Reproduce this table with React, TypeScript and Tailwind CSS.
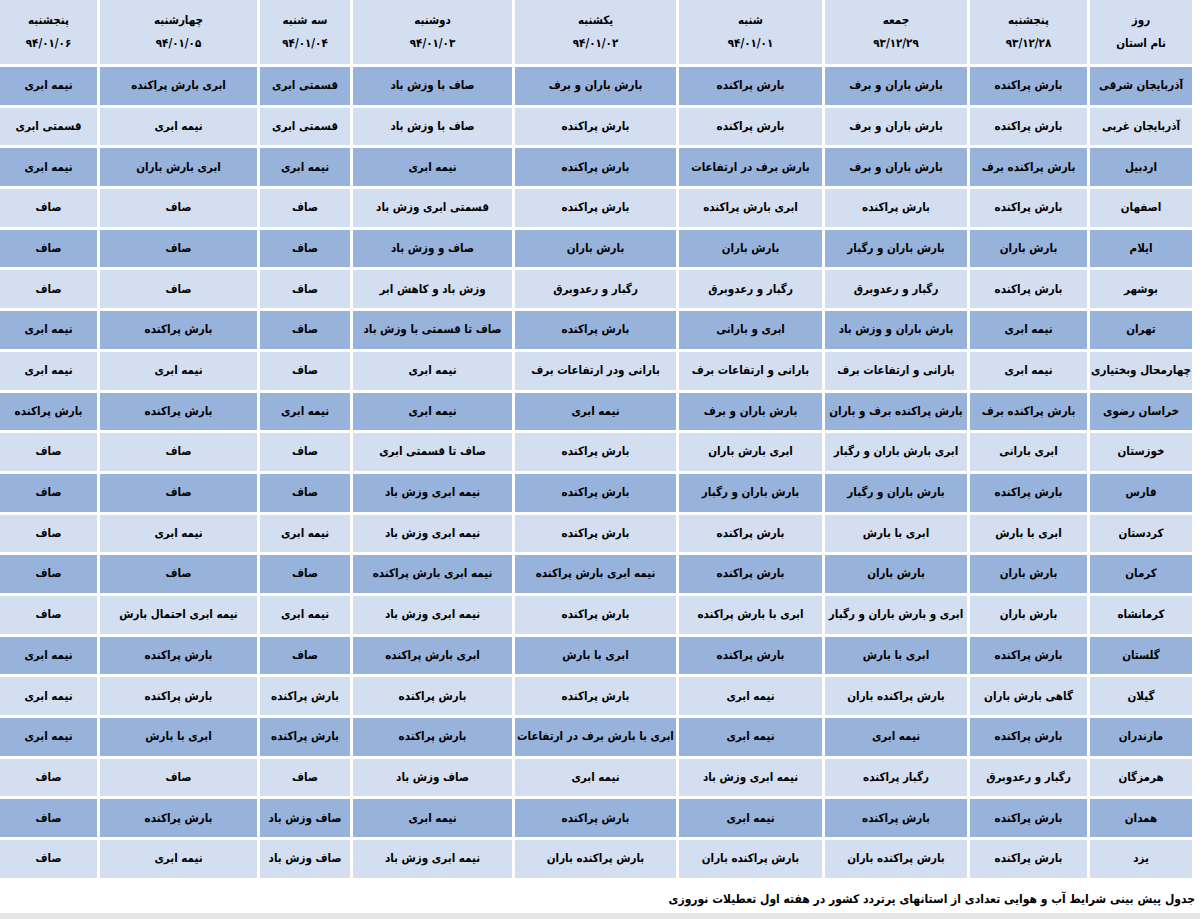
import React from "react";

const days = [
  { name: "پنجشنبه", date: "۹۳/۱۲/۲۸" },
  { name: "جمعه", date: "۹۳/۱۲/۲۹" },
  { name: "شنبه", date: "۹۴/۰۱/۰۱" },
  { name: "یکشنبه", date: "۹۴/۰۱/۰۲" },
  { name: "دوشنبه", date: "۹۴/۰۱/۰۳" },
  { name: "سه شنبه", date: "۹۴/۰۱/۰۴" },
  { name: "چهارشنبه", date: "۹۴/۰۱/۰۵" },
  { name: "پنجشنبه", date: "۹۴/۰۱/۰۶" },
];

const rows: string[][] = [
  ["آذربایجان شرقی", "بارش پراکنده", "بارش باران و برف", "بارش پراکنده", "بارش باران و برف", "صاف با وزش باد", "قسمتی ابری", "ابری بارش پراکنده", "نیمه ابری"],
  ["آذربایجان غربی", "بارش پراکنده", "بارش باران و برف", "بارش پراکنده", "بارش پراکنده", "صاف با وزش باد", "قسمتی ابری", "نیمه ابری", "قسمتی ابری"],
  ["اردبیل", "بارش پراکنده برف", "بارش باران و برف", "بارش برف در ارتفاعات", "بارش پراکنده", "نیمه ابری", "نیمه ابری", "ابری بارش باران", "نیمه ابری"],
  ["اصفهان", "بارش پراکنده", "بارش پراکنده", "ابری بارش پراکنده", "بارش پراکنده", "قسمتی ابری وزش باد", "صاف", "صاف", "صاف"],
  ["ایلام", "بارش باران", "بارش باران و رگبار", "بارش باران", "بارش باران", "صاف و وزش باد", "صاف", "صاف", "صاف"],
  ["بوشهر", "بارش پراکنده", "رگبار و رعدوبرق", "رگبار و رعدوبرق", "رگبار و رعدوبرق", "وزش باد و کاهش ابر", "صاف", "صاف", "صاف"],
  ["تهران", "نیمه ابری", "بارش باران و وزش باد", "ابری و بارانی", "بارش پراکنده", "صاف تا قسمتی با وزش باد", "صاف", "بارش پراکنده", "نیمه ابری"],
  ["چهارمحال وبختیاری", "نیمه ابری", "بارانی و ارتفاعات برف", "بارانی و ارتفاعات برف", "بارانی ودر ارتفاعات برف", "نیمه ابری", "صاف", "نیمه ابری", "نیمه ابری"],
  ["خراسان رضوی", "بارش پراکنده برف", "بارش پراکنده برف و باران", "بارش باران و برف", "نیمه ابری", "نیمه ابری", "نیمه ابری", "بارش پراکنده", "بارش پراکنده"],
  ["خوزستان", "ابری بارانی", "ابری بارش باران و رگبار", "ابری بارش باران", "بارش پراکنده", "صاف تا قسمتی ابری", "صاف", "صاف", "صاف"],
  ["فارس", "بارش پراکنده", "بارش باران و رگبار", "بارش باران و رگبار", "بارش پراکنده", "نیمه ابری وزش باد", "صاف", "صاف", "صاف"],
  ["کردستان", "ابری با بارش", "ابری با بارش", "بارش پراکنده", "بارش پراکنده", "نیمه ابری وزش باد", "نیمه ابری", "نیمه ابری", "صاف"],
  ["کرمان", "بارش باران", "بارش باران", "بارش پراکنده", "نیمه ابری بارش پراکنده", "نیمه ابری بارش پراکنده", "صاف", "صاف", "صاف"],
  ["کرمانشاه", "بارش باران", "ابری و بارش باران و رگبار", "ابری با بارش پراکنده", "بارش پراکنده", "نیمه ابری وزش باد", "نیمه ابری", "نیمه ابری احتمال بارش", "صاف"],
  ["گلستان", "بارش پراکنده", "ابری با بارش", "بارش پراکنده", "ابری با بارش", "ابری بارش پراکنده", "صاف", "بارش پراکنده", "نیمه ابری"],
  ["گیلان", "گاهی بارش باران", "بارش پراکنده باران", "نیمه ابری", "بارش پراکنده", "بارش پراکنده", "بارش پراکنده", "بارش پراکنده", "نیمه ابری"],
  ["مازندران", "بارش پراکنده", "نیمه ابری", "نیمه ابری", "ابری با بارش برف در ارتفاعات", "بارش پراکنده", "بارش پراکنده", "ابری با بارش", "نیمه ابری"],
  ["هرمزگان", "رگبار و رعدوبرق", "رگبار پراکنده", "نیمه ابری وزش باد", "نیمه ابری", "صاف وزش باد", "صاف", "صاف", "صاف"],
  ["همدان", "بارش پراکنده", "بارش پراکنده", "نیمه ابری", "بارش پراکنده", "نیمه ابری", "صاف وزش باد", "بارش پراکنده", "صاف"],
  ["یزد", "بارش پراکنده", "بارش پراکنده باران", "بارش پراکنده باران", "بارش پراکنده باران", "نیمه ابری وزش باد", "صاف وزش باد", "نیمه ابری", "صاف"],
];

export default function App() {
  return (
    <div
      dir="rtl"
      className="w-[1200px] h-[919px] bg-white text-black overflow-hidden flex flex-col"
      style={{ fontFamily: '"DejaVu Sans Condensed", "DejaVu Sans", sans-serif' }}
    >
      <div className="w-[1192px] mr-[8px] grid grid-cols-[102px_117px_142px_143px_161px_159px_90px_157px_97px] gap-[3px] bg-white text-[11.5px] font-bold">
        {/* header */}
        <div className="h-[64px] bg-[#d3def0] flex flex-col items-center justify-center leading-[23px]">
          <span>روز</span>
          <span>نام استان</span>
        </div>
        {days.map((d, i) => (
          <div key={i} className="h-[64px] bg-[#d3def0] flex flex-col items-center justify-center leading-[23px]">
            <span>{d.name}</span>
            <span>{d.date}</span>
          </div>
        ))}

        {/* rows */}
        {rows.map((r, ri) =>
          r.map((c, ci) => (
            <div
              key={`${ri}-${ci}`}
              className={`h-[37.7px] flex items-center justify-center whitespace-nowrap ${
                ri % 2 === 0 ? "bg-[#97b3dc]" : "bg-[#d3def0]"
              }`}
            >
              {c}
            </div>
          ))
        )}
      </div>

      <div className="mt-[15px] pr-[5px] text-[12px] font-bold text-right leading-none">
        جدول پیش بینی شرایط آب و هوایی تعدادی از استانهای پرتردد کشور در هفته اول تعطیلات نوروزی
      </div>

      <div className="mt-auto h-[6px] bg-[#e6e6e6]" />
    </div>
  );
}
